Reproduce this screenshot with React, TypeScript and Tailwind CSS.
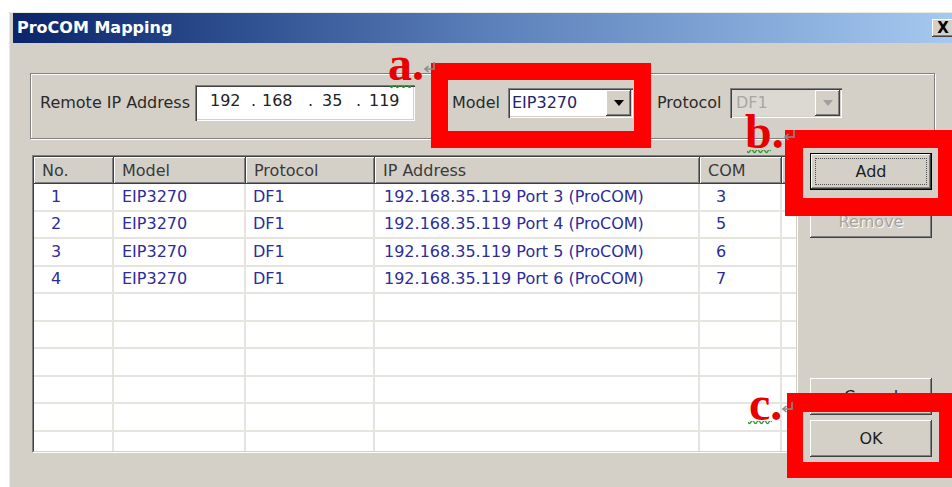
import React from "react";

type Row = { no: string; model: string; proto: string; ip: string; com: string };

const rows: Row[] = [
  { no: "1", model: "EIP3270", proto: "DF1", ip: "192.168.35.119 Port 3 (ProCOM)", com: "3" },
  { no: "2", model: "EIP3270", proto: "DF1", ip: "192.168.35.119 Port 4 (ProCOM)", com: "5" },
  { no: "3", model: "EIP3270", proto: "DF1", ip: "192.168.35.119 Port 5 (ProCOM)", com: "6" },
  { no: "4", model: "EIP3270", proto: "DF1", ip: "192.168.35.119 Port 6 (ProCOM)", com: "7" },
  { no: "", model: "", proto: "", ip: "", com: "" },
  { no: "", model: "", proto: "", ip: "", com: "" },
  { no: "", model: "", proto: "", ip: "", com: "" },
  { no: "", model: "", proto: "", ip: "", com: "" },
  { no: "", model: "", proto: "", ip: "", com: "" },
  { no: "", model: "", proto: "", ip: "", com: "" },
];

const raised =
  "shadow-[inset_-1px_-1px_0_#404040,inset_1px_1px_0_#ffffff,inset_-2px_-2px_0_#808080]";
const sunken =
  "shadow-[inset_1px_1px_0_#808080,inset_2px_2px_0_#404040,inset_-1px_-1px_0_#ffffff,inset_-2px_-2px_0_#d4d0c8]";

function DropArrow({ disabled }: { disabled?: boolean }) {
  return (
    <div className={`w-[25px] h-full bg-[#d4d0c8] flex items-center justify-center ${raised}`}>
      <svg width="10" height="6" viewBox="0 0 10 6">
        <path d="M0 0 H10 L5 6 Z" fill={disabled ? "#a0a0a0" : "#000000"} />
      </svg>
    </div>
  );
}

function Squiggle() {
  return (
    <svg width="24" height="5" viewBox="0 0 24 5">
      <path
        d="M0 1 Q1.5 4 3 1 T6 1 T9 1 T12 1 T15 1 T18 1 T21 1 T24 1"
        fill="none"
        stroke="#2e9a2e"
        strokeWidth="1.3"
      />
    </svg>
  );
}

function ReturnMark() {
  return (
    <svg width="13" height="12" viewBox="0 0 13 12">
      <path d="M11 1 V8 H3" fill="none" stroke="#8a8a8a" strokeWidth="1.6" />
      <path d="M5.5 5 L2 8 L5.5 11" fill="none" stroke="#8a8a8a" strokeWidth="1.6" />
    </svg>
  );
}

function Marker({ letter, className }: { letter: string; className: string }) {
  return (
    <div className={`absolute ${className}`}>
      <div className="flex items-start">
        <span className="text-[48px] leading-[28px] font-bold text-[#e80000] [font-family:'Liberation_Serif',serif]">
          {letter}
        </span>
        <span className="mt-[11px] -ml-[1px]">
          <ReturnMark />
        </span>
      </div>
    </div>
  );
}

export default function App() {
  return (
    <div className="relative w-[952px] h-[487px] overflow-hidden bg-white [font-family:'DejaVu_Sans',sans-serif]">
      <div className="pt-[12px] pl-[9px]">
        <div className="w-[960px] h-[500px] bg-[#d4d0c8] border-l border-t border-[#ebe9e4] pl-[3px]">
          {/* title bar */}
          <div className="w-[945px] h-[30px] flex items-center pl-[4px] pr-[4px] bg-gradient-to-r from-[#0a246a] via-[#5b7fb9] to-[#a6caf0]">
            <span className="text-white font-bold text-[16px] leading-none">ProCOM Mapping</span>
            <div className="flex-1" />
            <div
              className={`w-[22px] h-[18px] bg-[#d4d0c8] flex items-center justify-center ${raised}`}
            >
              <span className="text-black font-bold text-[15px] leading-none">X</span>
            </div>
          </div>

          {/* body */}
          <div className="pt-[30px] pl-[17px]">
            {/* connection settings group */}
            <div className="w-[905px] h-[66px] border border-[#808080] shadow-[inset_1px_1px_0_#ffffff,1px_1px_0_#ffffff] flex items-center pl-[9px] pb-[6px] text-[16px] text-[#2a2a2a]">
              <span className="w-[155px] leading-none">Remote IP Address</span>
              <div className={`w-[220px] h-[36px] bg-white flex items-center ${sunken}`}>
                <div className="flex items-center leading-none text-[16px] text-[#222] pb-[4px]">
                  <span className="w-[41px] ml-[15px]">192</span>
                  <span className="w-[11px]">.</span>
                  <span className="w-[46px]">168</span>
                  <span className="w-[14px]">.</span>
                  <span className="w-[34px]">35</span>
                  <span className="w-[13px]">.</span>
                  <span className="w-[32px]">119</span>
                </div>
              </div>
              <span className="ml-[37px] w-[56px] leading-none">Model</span>
              <div className={`w-[125px] h-[30px] bg-white flex items-center p-[2px] ${sunken}`}>
                <span className="flex-1 pl-[2px] leading-none text-[#24246a]">EIP3270</span>
                <DropArrow />
              </div>
              <span className="ml-[24px] w-[73px] leading-none">Protocol</span>
              <div className={`w-[112px] h-[30px] bg-[#dcd9d2] flex items-center p-[2px] ${sunken}`}>
                <span className="flex-1 pl-[4px] leading-none text-[#a8a6a0]">DF1</span>
                <DropArrow disabled />
              </div>
            </div>

            {/* list and buttons */}
            <div className="flex items-start mt-[14px]">
              <div className="ml-[2px] mt-[2px] w-[766px] h-[298px] border border-t-[#808080] border-l-[#808080] border-r-white border-b-white">
                <div className="w-full h-full border border-t-[#404040] border-l-[#404040] border-r-[#d4d0c8] border-b-[#d4d0c8] bg-white overflow-hidden">
                  <div className="grid grid-cols-[80px_132px_129px_325px_82px_1fr] h-[27px] text-[16px] text-[#3a3a3a]">
                    {["No.", "Model", "Protocol", "IP Address", "COM", ""].map((h, i) => (
                      <div
                        key={i}
                        className={`bg-[#d4d0c8] flex items-center pl-[8px] leading-none ${raised}`}
                      >
                        {h}
                      </div>
                    ))}
                  </div>
                  {rows.map((r, i) => (
                    <div
                      key={i}
                      className="grid grid-cols-[80px_132px_129px_325px_82px_1fr] h-[27.5px] text-[16px] text-[#2c2c9c] leading-none"
                    >
                      <div className="border-r-2 border-b-2 border-[#e6e4de] flex items-center pl-[17px]">
                        {r.no}
                      </div>
                      <div className="border-r-2 border-b-2 border-[#e6e4de] flex items-center pl-[8px]">
                        {r.model}
                      </div>
                      <div className="border-r-2 border-b-2 border-[#e6e4de] flex items-center pl-[7px]">
                        {r.proto}
                      </div>
                      <div className="border-r-2 border-b-2 border-[#e6e4de] flex items-center pl-[9px]">
                        {r.ip}
                      </div>
                      <div className="border-r-2 border-b-2 border-[#e6e4de] flex items-center pl-[16px]">
                        {r.com}
                      </div>
                      <div className="border-b-2 border-[#e6e4de]" />
                    </div>
                  ))}
                </div>
              </div>

              <div className="ml-[12px] w-[122px] flex flex-col text-[16px] leading-none">
                <div className="h-[37px] border border-black bg-[#d4d0c8]">
                  <div className={`w-full h-full p-[4px] ${raised}`}>
                    <div className="w-full h-full border border-dotted border-[#505050] flex items-center justify-center text-[#1e1e1e]">
                      Add
                    </div>
                  </div>
                </div>
                <div
                  className={`mt-[10px] h-[38px] pt-[6px] bg-[#d4d0c8] flex items-center justify-center text-[#a6a39c] [text-shadow:1px_1px_0_#ffffff] ${raised}`}
                >
                  Remove
                </div>
                <div
                  className={`mt-[140px] h-[37px] bg-[#d4d0c8] flex items-center justify-center text-[#1e1e1e] ${raised}`}
                >
                  Cancel
                </div>
                <div
                  className={`mt-[5px] h-[37px] bg-[#d4d0c8] flex items-center justify-center text-[#1e1e1e] ${raised}`}
                >
                  OK
                </div>
              </div>
            </div>
          </div>
        </div>
      </div>

      {/* callout frames */}
      <div className="absolute left-[431px] top-[63px] w-[220px] h-[85px] border-[17px] border-[#ff0000]" />
      <div className="absolute left-[785px] top-[130px] w-[170px] h-[86px] border-[18px] border-r-[17px] border-[#ff0000]" />
      <div className="absolute left-[787px] top-[393px] w-[168px] h-[85px] border-[16px] border-t-[19px] border-[#ff0000]" />

      {/* callout letters */}
      <Marker letter="a." className="left-[388px] top-[50px]" />
      <Marker letter="b." className="left-[745px] top-[118px]" />
      <Marker letter="c." className="left-[749px] top-[390px]" />
      <div className="absolute left-[390px] top-[85px]">
        <Squiggle />
      </div>
      <div className="absolute left-[747px] top-[150px]">
        <Squiggle />
      </div>
      <div className="absolute left-[748px] top-[421px]">
        <Squiggle />
      </div>
    </div>
  );
}
